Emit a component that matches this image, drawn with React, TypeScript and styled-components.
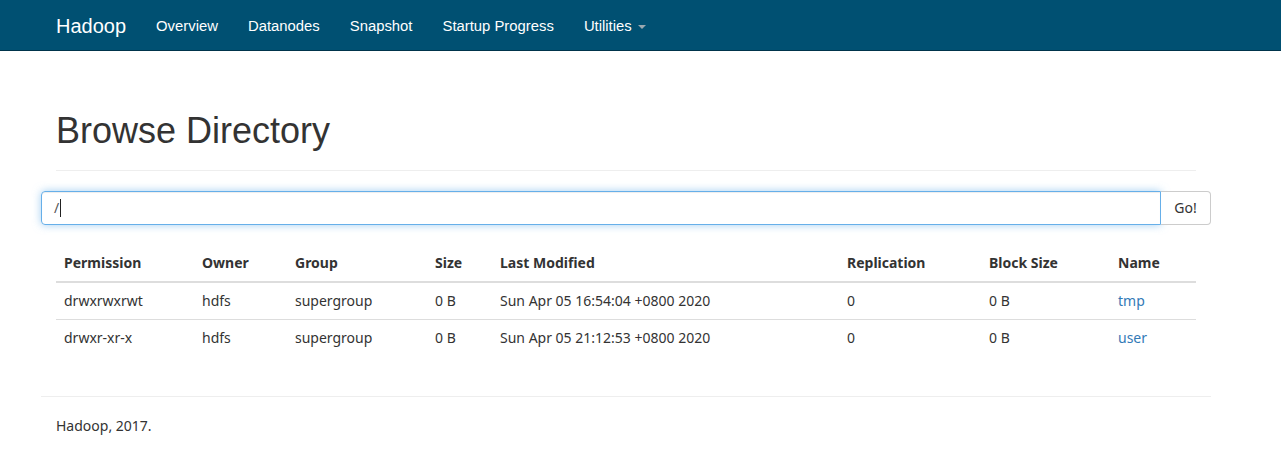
import React from "react";
import styled, { createGlobalStyle } from "styled-components";

const Global = createGlobalStyle`
  html, body { margin: 0; padding: 0; background: #fff; }
  body {
    font-family: "Noto Sans", "Open Sans", sans-serif;
    font-size: 14px;
    color: #333;
  }
  * { box-sizing: border-box; }
`;

const NavBar = styled.nav`
  height: 51px;
  background: #005072;
  border-bottom: 1px solid #00344b;
  display: flex;
  align-items: center;
`;

const NavInner = styled.div`
  margin-left: 41px;
  width: 1170px;
  padding: 2px 15px 0;
  display: flex;
  align-items: center;
`;

const Brand = styled.a`
  font-family: "Liberation Sans", Arial, sans-serif;
  font-size: 20px;
  color: #fff;
  margin-right: 15px;
  padding-top: 1px;
`;

const NavLink = styled.a`
  font-family: "Liberation Sans", Arial, sans-serif;
  font-size: 14.85px;
  color: #fff;
  padding: 0 15px;
  display: flex;
  align-items: center;
  gap: 6px;
`;

const Caret = styled.span`
  width: 0;
  height: 0;
  border-left: 4px solid transparent;
  border-right: 4px solid transparent;
  border-top: 4px solid #9aa8b0;
  margin-top: 2px;
`;

const Container = styled.div`
  margin-left: 41px;
  width: 1170px;
`;

const Section = styled.div`
  padding: 0 15px;
`;

const Header = styled.div`
  padding-bottom: 9px;
  margin: 60px 0 20px;
  border-bottom: 1px solid #eee;
`;

const H1 = styled.h1`
  font-family: "Liberation Sans", Arial, sans-serif;
  font-size: 36px;
  font-weight: 400;
  line-height: 1.1;
  margin: 0 0 10px;
  color: #333;
`;

const InputGroup = styled.div`
  display: flex;
  height: 34px;
`;

const PathInput = styled.div`
  flex: 1;
  border: 1px solid #66afe9;
  border-radius: 4px 0 0 4px;
  box-shadow: inset 0 1px 1px rgba(0,0,0,.075), 0 0 8px rgba(102,175,233,.6);
  padding: 6px 12px;
  font-size: 14px;
  line-height: 20px;
  color: #555;
  display: flex;
  align-items: center;
`;

const Cursor = styled.span`
  display: inline-block;
  width: 1px;
  height: 18px;
  background: #222;
  margin-left: 1px;
`;

const GoButton = styled.button`
  width: 50px;
  border: 1px solid #ccc;
  border-left: none;
  border-radius: 0 4px 4px 0;
  background: #fff;
  font-family: "Noto Sans", "Open Sans", sans-serif;
  font-size: 14px;
  color: #333;
  padding: 0;
`;

const Table = styled.table`
  width: 100%;
  border-collapse: collapse;
  margin-top: 20px;
  margin-bottom: 20px;
`;

const Th = styled.th<{ w?: number }>`
  text-align: left;
  font-weight: 700;
  padding: 8px;
  line-height: 20px;
  border-bottom: 2px solid #ddd;
  width: ${(p) => (p.w ? `${p.w}px` : "auto")};
  font-size: 14px;
`;

const Td = styled.td`
  padding: 8px;
  line-height: 20px;
  height: 37px;
  border-top: 1px solid #ddd;
  font-size: 14px;
`;

const Link = styled.a`
  color: #337ab7;
  text-decoration: none;
`;

const Footer = styled.footer`
  margin-top: 40px;
  border-top: 1px solid #eee;
  padding: 19px 15px 0;
  font-size: 14px;
`;

const rows = [
  ["drwxrwxrwt", "hdfs", "supergroup", "0 B", "Sun Apr 05 16:54:04 +0800 2020", "0", "0 B", "tmp"],
  ["drwxr-xr-x", "hdfs", "supergroup", "0 B", "Sun Apr 05 21:12:53 +0800 2020", "0", "0 B", "user"],
];

const heads: [string, number][] = [
  ["Permission", 138],
  ["Owner", 93],
  ["Group", 140],
  ["Size", 65],
  ["Last Modified", 347],
  ["Replication", 142],
  ["Block Size", 129],
  ["Name", 0],
];

export default function App() {
  return (
    <>
      <Global />
      <NavBar>
        <NavInner>
          <Brand>Hadoop</Brand>
          <NavLink>Overview</NavLink>
          <NavLink>Datanodes</NavLink>
          <NavLink>Snapshot</NavLink>
          <NavLink>Startup Progress</NavLink>
          <NavLink>
            Utilities <Caret />
          </NavLink>
        </NavInner>
      </NavBar>
      <Container>
        <Section>
          <Header>
            <H1>Browse Directory</H1>
          </Header>
        </Section>
        <InputGroup>
          <PathInput>
            /<Cursor />
          </PathInput>
          <GoButton>Go!</GoButton>
        </InputGroup>
        <Section>
          <Table>
            <thead>
              <tr>
                {heads.map(([h, w]) => (
                  <Th key={h} w={w || undefined}>
                    {h}
                  </Th>
                ))}
              </tr>
            </thead>
            <tbody>
              {rows.map((r) => (
                <tr key={r[7]}>
                  {r.map((c, i) => (
                    <Td key={i}>{i === 7 ? <Link>{c}</Link> : c}</Td>
                  ))}
                </tr>
              ))}
            </tbody>
          </Table>
        </Section>
        <Footer>Hadoop, 2017.</Footer>
      </Container>
    </>
  );
}
